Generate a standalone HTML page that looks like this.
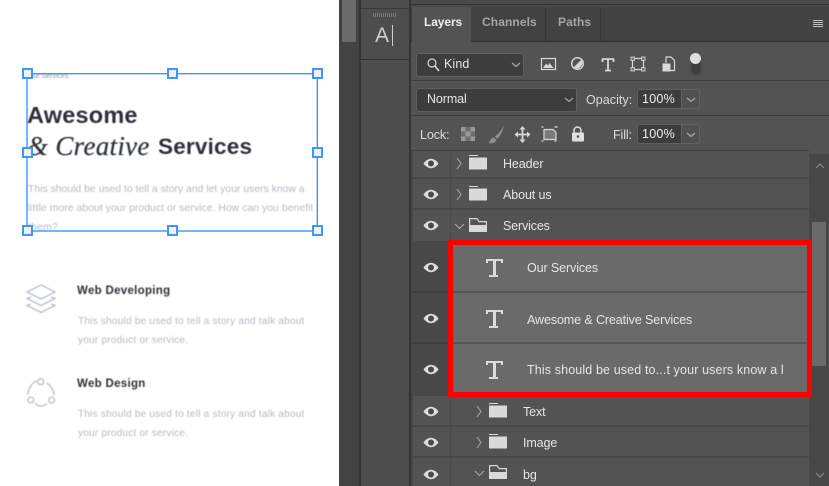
<!DOCTYPE html>
<html><head><meta charset="utf-8">
<style>
html,body{margin:0;padding:0;background:#fff}
#r{position:relative;width:829px;height:486px;overflow:hidden;background:#fff;font-family:"Liberation Sans",sans-serif}
.a,.t{position:absolute;white-space:nowrap}
.t{color:#e6e6e6;font-size:12.5px;letter-spacing:-.1px;line-height:16px}
.tab{font-size:12px;font-weight:bold;letter-spacing:.1px;color:#a5a5a5}
.b{position:absolute}
.blur{filter:blur(.45px)}
.g{color:#b4b9c3;font-size:10.3px;line-height:16px}
.d{font-size:10px;letter-spacing:.24px}
.h{color:#2b2f35;font-size:11.5px;font-weight:bold;letter-spacing:.3px;line-height:16px}
.sel{position:absolute;background:#3d3d3d;border:1px solid #5f5f5f;border-radius:3px;box-sizing:border-box}
.hd{position:absolute;width:11px;height:11px;box-sizing:border-box;border:2px solid #3f97f5;background:#f1f1f1}
svg{position:absolute;overflow:visible}
</style></head><body><div id="r">

<!-- canvas -->
<div class="a blur" style="left:28px;top:72px;color:#8d9097;font-size:7px;line-height:10px">Our Services</div>
<div class="a blur" style="left:27px;top:101px;color:#2b3038;font-size:23.5px;font-weight:bold;line-height:28px;letter-spacing:.2px">Awesome</div>
<div class="a blur" style="left:27px;top:132px;color:#2b3038;font-size:27px;line-height:28px;font-family:'Liberation Serif',serif;font-style:italic;letter-spacing:.3px;-webkit-text-stroke:.2px #2b3038">&amp; Creative</div>
<div class="a blur" style="left:158px;top:133px;color:#2b3038;font-size:22.5px;line-height:28px;font-weight:bold;letter-spacing:.2px">Services</div>
<div class="a g blur" style="left:28px;top:182px;letter-spacing:.05px">This should be used to tell a story and let your users know a</div>
<div class="a g blur" style="left:28px;top:201px;letter-spacing:.09px">little more about your product or service. How can you benefit</div>
<div class="a g blur" style="left:28px;top:220px;letter-spacing:.25px">them?</div>

<svg style="left:0;top:0" width="340" height="240" fill="none"><rect x="27" y="73.700" width="290.300" height="157.300" stroke="#3f97f5" stroke-width="1.400"/></svg>
<div class="hd" style="left:22px;top:68px"></div><div class="hd" style="left:167px;top:68px"></div><div class="hd" style="left:312px;top:68px"></div>
<div class="hd" style="left:22px;top:147px"></div><div class="hd" style="left:312px;top:147px"></div>
<div class="hd" style="left:22px;top:225px"></div><div class="hd" style="left:167px;top:225px"></div><div class="hd" style="left:312px;top:225px"></div>

<svg class="blur" style="left:0;top:0" width="80" height="420" fill="none" stroke="#aab2bf" stroke-width="1.100">
<path d="M41 285l14 7-14 7-14-7z"/>
<path d="M31 297l-4 1.500 14 7 14-7-4-1.500"/>
<path d="M31 304l-4 1.500 14 7 14-7-4-1.500"/>
<circle cx="40.700" cy="381.700" r="3"/><circle cx="30.700" cy="400" r="3"/><circle cx="51.700" cy="400" r="3"/>
<path d="M27.700 395c.5-6 4-12 9-14.300M46.700 383c4 2.500 7 7 7.300 12M35 403.300c3.500 3.500 8.500 4 11.700 0"/>
</svg>
<div class="a h blur" style="left:77px;top:283px">Web Developing</div>
<div class="a g d blur" style="left:78px;top:314px">This should be used to tell a story and talk about</div>
<div class="a g d blur" style="left:78px;top:333px">your product or service.</div>
<div class="a h blur" style="left:77px;top:376px">Web Design</div>
<div class="a g d blur" style="left:78px;top:407px">This should be used to tell a story and talk about</div>
<div class="a g d blur" style="left:78px;top:426px">your product or service.</div>

<!-- left dark strips -->
<div class="b" style="left:339px;top:0;width:20px;height:486px;background:#434343"></div>
<div class="b" style="left:342px;top:0;width:14px;height:42px;background:#6b6b6b"></div>
<div class="b" style="left:359px;top:0;width:2px;height:486px;background:#333"></div>
<div class="b" style="left:361px;top:0;width:48px;height:486px;background:#4d4d4d"></div>
<div class="b" style="left:361px;top:8px;width:48px;height:1px;background:#3a3a3a"></div>
<div class="b" style="left:361px;top:59px;width:48px;height:1px;background:#333"></div>
<div class="b" style="left:373px;top:13px;width:24px;height:4px;background:repeating-linear-gradient(90deg,#777 0 1px,#4d4d4d 1px 2px)"></div>
<div class="a" style="left:375px;top:24px;color:#cfcfcf;font-size:21px;line-height:24px">A</div>
<div class="b" style="left:392px;top:25px;width:1px;height:21px;background:#cfcfcf"></div>
<div class="b" style="left:409px;top:0;width:2px;height:486px;background:#333"></div>

<!-- panel -->
<div class="b" style="left:411px;top:0;width:418px;height:486px;background:#535353"></div>
<div class="b" style="left:411px;top:0;width:418px;height:7px;background:#4a4a4a"></div>
<div class="b" style="left:411px;top:4px;width:418px;height:1px;background:#333"></div>
<div class="b" style="left:411px;top:7px;width:418px;height:35px;background:#424242"></div>
<div class="b" style="left:411px;top:41px;width:418px;height:1px;background:#2f2f2f"></div>
<div class="b" style="left:412px;top:7px;width:59px;height:35px;background:#535353"></div>
<div class="b" style="left:545px;top:7px;width:1px;height:34px;background:#353535"></div>
<div class="b" style="left:600px;top:7px;width:1px;height:34px;background:#353535"></div>
<div class="t tab" style="left:424px;top:14px;color:#f0f0f0;letter-spacing:-.1px">Layers</div>
<div class="t tab" style="left:482px;top:14px">Channels</div>
<div class="t tab" style="left:558px;top:14px">Paths</div>
<div class="b" style="left:813px;top:20px;width:10px;height:7px;background:repeating-linear-gradient(180deg,#c0c0c0 0 1px,#424242 1px 2px)"></div>

<div class="b" style="left:411px;top:80px;width:418px;height:1px;background:#3f3f3f"></div>
<div class="b" style="left:411px;top:115px;width:418px;height:1px;background:#3f3f3f"></div>
<div class="b" style="left:411px;top:150px;width:398px;height:1px;background:#3f3f3f"></div>

<!-- dropdowns -->
<div class="sel" style="left:416px;top:53px;width:108px;height:24px"></div>
<div class="sel" style="left:416px;top:88px;width:161px;height:24px"></div>
<div class="sel" style="left:637px;top:89px;width:63px;height:20px"></div>
<div class="b" style="left:681px;top:89px;width:19px;height:20px;background:#505050;border:1px solid #616161;box-sizing:border-box;border-radius:0 3px 3px 0"></div>
<div class="sel" style="left:637px;top:124px;width:63px;height:20px"></div>
<div class="b" style="left:681px;top:124px;width:19px;height:20px;background:#505050;border:1px solid #616161;box-sizing:border-box;border-radius:0 3px 3px 0"></div>

<svg style="left:0;top:0" width="829" height="150" fill="none" stroke="#d8d8d8" stroke-width="1.200">
<circle cx="432" cy="63" r="4"/><path d="M435 66l4 5" stroke-width="1.600"/>
<path d="M512 63l4 3.500 4-3.500" stroke="#aaa"/>
<path d="M565 98l4 3.500 4-3.500" stroke="#aaa"/>
<path d="M687 98l4 3.500 4-3.500" stroke="#aaa"/>
<path d="M687 133l4 3.500 4-3.500" stroke="#aaa"/>
<rect x="541.500" y="58.500" width="14" height="11"/>
<path d="M543 68l3-4.500 2 2 1.500-2.500 4 5z" fill="#d8d8d8" stroke="none"/>
<circle cx="577.500" cy="63.500" r="5.800" stroke-width="1.400"/>
<path d="M573.500 67.500l8-8a5.800 5.800 0 0 1-8 8z" fill="#d8d8d8" stroke="none"/>
<path d="M602 59h12M608 59v11.500M605 70.500h6M602.500 59v3M613.500 59v3" stroke-width="1.800"/>
<rect x="632.500" y="58.500" width="11" height="11"/>
<rect x="631" y="57" width="3.500" height="3.500" fill="#777" stroke="#d8d8d8" stroke-width=".8"/><rect x="641.500" y="57" width="3.500" height="3.500" fill="#777" stroke="#d8d8d8" stroke-width=".8"/><rect x="631" y="67.500" width="3.500" height="3.500" fill="#777" stroke="#d8d8d8" stroke-width=".8"/><rect x="641.500" y="67.500" width="3.500" height="3.500" fill="#777" stroke="#d8d8d8" stroke-width=".8"/>
<path d="M666 63v-6h5l3.500 3.500v10h-4"/>
<rect x="662.500" y="63.500" width="8" height="8" fill="#d8d8d8" stroke="none"/>
<rect x="691" y="55" width="10" height="20" rx="5" fill="#3f3f3f" stroke="#4a4a4a"/>
<circle cx="695.500" cy="58.500" r="5.500" fill="#e0e0e0" stroke="none"/>
<!-- lock row -->
<rect x="461" y="127" width="14" height="14" fill="#6e6e6e" stroke="none"/>
<path d="M461 127h4.500v4.500h-4.500zM470.500 127h4.500v4.500h-4.500zM465.500 131.500h5v5h-5zM461 136.500h4.500v4.500h-4.500zM470.500 136.500h4.500v4.500h-4.500z" fill="#989898" stroke="none"/>
<path d="M504 126c-2.500 4-6 8-9 10.500l2 2.500c3-2.500 5.500-7 7-13zM494 137.500c-2.500 .5-3.500 2-4 3.500-.3 1-1 2-2 2 3.500 .7 7.500 0 8.500-3z" fill="#8f8f8f" stroke="none"/>
<path d="M522.500 128v13M516.500 134.500h12" stroke-width="1.800"/>
<path d="M519.500 129.500l3-3.500 3 3.500zM519.500 139.500l3 3.500 3-3.500zM518 131.500l-3.500 3 3.500 3zM527 131.500l3.500 3-3.500 3z" fill="#d8d8d8" stroke="none"/>
<path d="M544 129.500h9l3 3v7h-12z" fill="#7a7a7a"/>
<path d="M541.500 127h2M554.500 127h2M541.500 141h2M554.500 141h2M556 126.500l1.500 1"/>
<path d="M574 133v-2.500a3.500 3.500 0 0 1 7 0v2.500" stroke-width="1.500" stroke="#e0e0e0"/>
<rect x="572" y="132.500" width="12" height="9" fill="#e0e0e0" stroke="none" rx="1"/>
<circle cx="578" cy="136.500" r="1.300" fill="#535353" stroke="none"/>
</svg>
<div class="t" style="left:444px;top:56px;letter-spacing:.1px">Kind</div>
<div class="t" style="left:427px;top:91px">Normal</div>
<div class="t" style="left:586px;top:92px;color:#dcdcdc;letter-spacing:.05px">Opacity:</div>
<div class="t" style="left:642px;top:91px;letter-spacing:.25px;color:#eee">100%</div>
<div class="t" style="left:420px;top:127px;color:#dcdcdc">Lock:</div>
<div class="t" style="left:613px;top:127px;color:#dcdcdc">Fill:</div>
<div class="t" style="left:642px;top:126px;letter-spacing:.25px;color:#eee">100%</div>

<!-- layer rows -->
<div class="b" style="left:411px;top:151px;width:2px;height:335px;background:#484848"></div>
<div class="b" style="left:450px;top:154px;width:1px;height:332px;background:#494949"></div>
<div class="b" style="left:411px;top:241px;width:39px;height:155px;background:#484848"></div>
<div class="b" style="left:411px;top:177px;width:398px;height:2px;background:#494949"></div>
<div class="b" style="left:411px;top:208px;width:398px;height:2px;background:#494949"></div>
<div class="b" style="left:411px;top:291px;width:39px;height:2px;background:#3f3f3f"></div>
<div class="b" style="left:411px;top:342px;width:39px;height:2px;background:#3f3f3f"></div>
<div class="b" style="left:411px;top:425px;width:398px;height:2px;background:#494949"></div>
<div class="b" style="left:411px;top:456px;width:398px;height:2px;background:#494949"></div>

<!-- selection -->
<div class="b" style="left:448px;top:240px;width:364px;height:157px;box-sizing:border-box;border:5px solid #f00;background:#6a6a6a"></div>
<div class="b" style="left:453px;top:291px;width:354px;height:2px;background:#565656"></div>
<div class="b" style="left:453px;top:342px;width:354px;height:2px;background:#565656"></div>

<!-- right scrollbar -->
<div class="b" style="left:809px;top:154px;width:20px;height:332px;background:#474747"></div>
<div class="b" style="left:812px;top:222px;width:14px;height:144px;background:#6a6a6a"></div>
<div class="b" style="left:807px;top:240px;width:5px;height:157px;background:#f00"></div>

<svg style="left:0;top:0" width="829" height="486" fill="none" stroke="#aaa" stroke-width="1">
<path d="M816 168l4-4 4 4M816 473l4 4 4-4" stroke="#8a8a8a" stroke-width="1.200"/>
<!-- chevrons -->
<path d="M457 158l4 5.500-4 5.500M457 189l4 5.500-4 5.500M477 406l4 5.500-4 5.500M477 437l4 5.500-4 5.500"/>
<path d="M455 224l4.500 4.500 4.500-4.500M475 471l4.500 4.500 4.500-4.500"/>
<!-- closed folders -->
<g fill="#d9d9d9" stroke="none">
<path d="M469 155h9v1h-9zM469 157.500h18v12h-18z"/>
<path d="M469 186h9v1h-9zM469 188.500h18v12h-18z"/>
<path d="M489 403h9v1h-9zM489 405.500h18v12h-18z"/>
<path d="M489 434h9v1h-9zM489 436.500h18v12h-18z"/>
<!-- open folders -->
<rect x="469" y="225" width="18" height="7"/>
<rect x="489" y="472" width="18" height="7"/>
</g>
<path d="M469.600 226v-7.400h7.400l2 3h7.400v4.400" stroke="#d9d9d9" stroke-width="1.200"/>
<path d="M489.600 473v-7.400h7.400l2 3h7.400v4.400" stroke="#d9d9d9" stroke-width="1.200"/>
<!-- T icons -->
<g stroke="#dcdcdc" stroke-width="2">
<path d="M486 260h17M489 276h9M487 259v4M502 259v4"/>
<path d="M486 311h17M489 327h9M487 310v4M502 310v4"/>
<path d="M486 362h17M489 378h9M487 361v4M502 361v4"/>
<path d="M494.500 260v16M494.500 311v16M494.500 362v16" stroke-width="3"/>
</g>
<!-- eyes -->
<g id="e">
<path d="M423.500 163.500c2-3 5-4.700 7.500-4.700s5.500 1.700 7.500 4.700c-2 3-5 4.700-7.500 4.700s-5.500-1.700-7.500-4.700z" fill="#dedede" stroke="none"/>
<circle cx="431" cy="163.500" r="3" fill="#4a4a4a" stroke="none"/>
</g>
<use href="#e" y="31"/><use href="#e" y="62"/><use href="#e" y="104"/><use href="#e" y="155"/><use href="#e" y="206"/><use href="#e" y="248"/><use href="#e" y="279"/><use href="#e" y="311"/>
</svg>

<div class="t" style="left:503px;top:156px">Header</div>
<div class="t" style="left:503px;top:187px">About us</div>
<div class="t" style="left:503px;top:218px;letter-spacing:-.15px">Services</div>
<div class="t" style="left:527px;top:260px;letter-spacing:-.1px">Our Services</div>
<div class="t" style="left:527px;top:312px">Awesome &amp; Creative Services</div>
<div class="t" style="left:527px;top:362px;letter-spacing:.13px">This should be used to...t your users know a l</div>
<div class="t" style="left:523px;top:404px">Text</div>
<div class="t" style="left:523px;top:435px">Image</div>
<div class="t" style="left:523px;top:467px">bg</div>

</div></body></html>
